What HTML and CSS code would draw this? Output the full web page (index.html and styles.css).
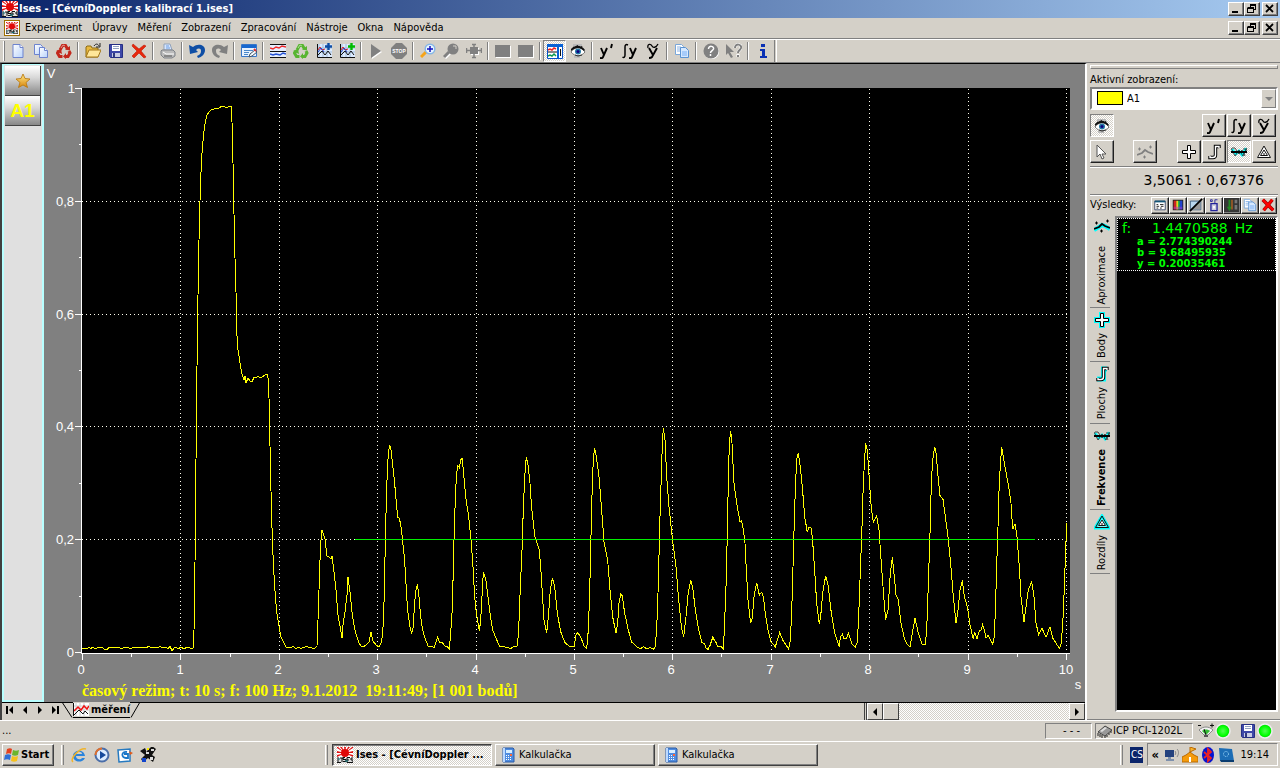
FILE: index.html
```html
<!DOCTYPE html>
<html lang="cs">
<head>
<meta charset="utf-8">
<title>Ises - [CévníDoppler s kalibrací 1.ises]</title>
<link rel="stylesheet" href="styles.css">
</head>
<body>
<svg class="defs" aria-hidden="true">
  <defs>
    <linearGradient id="gold" x2="0" y2="1"><stop stop-color="#ffe98a"/><stop offset="1" stop-color="#d8860b"/></linearGradient>
    <linearGradient id="sheet" x2="1" y2="1"><stop stop-color="#fff"/><stop offset="1" stop-color="#b9d3fb"/></linearGradient>
    <radialGradient id="led"><stop stop-color="#5f5"/><stop offset=".7" stop-color="#0f0"/><stop offset="1" stop-color="#0c0"/></radialGradient>
    <symbol id="ises" viewBox="0 0 16 16"><rect width="16" height="16" fill="#fff"/><path d="M8 6L0 1V0h1zM8 6L3 0h2zM8 6L7 0h2zM8 6l3-6h2zM8 6l7-6h1v1zM8 6l8-2v2zM8 6L0 4v2zM8 6L0 8v2zM8 6l8 2v2z" fill="#e01010"/><circle cx="8" cy="6" r="4" fill="#e00808"/><path d="M0 11h16v5H0z" fill="#ddd"/><path d="M1 10v5M0 15.500h4M3 11h4M5 11v4M8 10.500H6v2h3v2H6M13 10.500h-3v5h3M10 13h2M16 11h-2v2h2v2.500h-3" stroke="#111" fill="none"/><path d="M1 12h2M8 14h3" stroke="#0a7c80"/></symbol>
    <symbol id="page" viewBox="0 0 16 16"><path d="M3 1.500h7l3 3v10H3z" fill="url(#sheet)" stroke="#6d83cf"/><path d="M10 1.500v3h3" fill="#fff" stroke="#6d83cf"/></symbol>
    <symbol id="pages" viewBox="0 0 16 16"><path d="M1.500 1.500h6l2 2v8h-8z" fill="url(#sheet)" stroke="#6d83cf"/><path d="M6.500 4.500h5l3 3v7h-8z" fill="url(#sheet)" stroke="#6d83cf"/><path d="M11.500 4.500v3h3" fill="#fff" stroke="#6d83cf"/></symbol>
    <symbol id="copy" viewBox="0 0 16 16"><path d="M1.500 1.500h6l2 2v8h-8z" fill="#fff" stroke="#7aa7d9"/><path d="M3 4h4M3 6h5M3 8h3" stroke="#8ab4e8"/><path d="M6.500 4.500h5l3 3v7h-8z" fill="#d5e8ff" stroke="#5b93d2"/><path d="M8 8h5v5H8z" fill="#a6cbfa"/></symbol>
    <symbol id="recycle" viewBox="0 0 16 16"><path d="M4 7l2.500-4.500h3L11.500 6M13 8l1 2-2 3.500H9M6.500 13.500h-3L1.500 10 3 8" fill="none" stroke="currentColor" stroke-width="3"/><path d="M9 6.500l5 1V3zM10 10v6l-3-2.500zM0 8l5-2 1 5z" fill="currentColor"/><path d="M5 5l2-3 2 1" stroke="#fff" stroke-opacity=".5" fill="none"/></symbol>
    <symbol id="open" viewBox="0 0 16 16"><path d="M1 14V4l1-1h4l1 2h6v9z" fill="#e9b93e" stroke="#8c6a12"/><path d="M1 14l3-7h12l-3 7z" fill="#ffe79a" stroke="#a5781a"/><path d="M9 3c2-3 4-2 5 0M15 0v4h-4" fill="none" stroke="#222"/></symbol>
    <symbol id="floppy" viewBox="0 0 16 16"><path d="M1.500 1.500h13v13h-12l-1-1z" fill="#3e48a8" stroke="#262f84"/><path d="M4 2h8v6H4z" fill="#fff"/><path d="M5 3.500h6M5 5.500h6" stroke="#90a0c0"/><path d="M4 10h8v4H4z" fill="#c8cce4"/><path d="M5 10h2v4H5z" fill="#30397e"/></symbol>
    <symbol id="cross" viewBox="0 0 16 16"><path d="M2 1l6 5 5-4 2 1-5 5 5 6-2 1-5-5-5 5-2-2 5-5-5-5z" fill="#e8270c" stroke="#bd1a05" stroke-width=".6"/></symbol>
    <symbol id="printer" viewBox="0 0 16 16"><path d="M4 7V1h6l2 6z" fill="#d6e6ff" stroke="#91a3bb"/><path d="M6 3h3M6 5h4" stroke="#6c9de0"/><path d="M2 7h11l2 2v4l-3 2H4l-3-3V8z" fill="#bbb" stroke="#7e8288"/><path d="M3 9l3 2h8" stroke="#fff" fill="none"/><path d="M4 13h8" stroke="#555"/></symbol>
    <symbol id="undo" viewBox="0 0 16 16"><path d="M0 2l4 2c5-4 12-2 12 3 0 4-3 7-7 8l-1-2c3-1 4-3 4-5 0-3-3-3-5-1l2 2-8 2z" fill="currentColor"/></symbol>
    <symbol id="note" viewBox="0 0 16 16"><path d="M.5 1.500h15v12H.5z" fill="#e8f2ff" stroke="#3876c8"/><path d="M1 2h14v3H1z" fill="#1767cf"/><path d="M3 7.500h9M3 9.500h5M3 11.500h4" stroke="#4b88c9"/><path d="M8 14l1-3 5-4 2 2-5 4z" fill="#f6fbff" stroke="#456"/><path d="M13 6l2 2" stroke="#d33" stroke-width="2"/></symbol>
    <symbol id="chart" viewBox="0 0 16 16"><path d="M0 1h16v14H0z" fill="#e5efff"/><path d="M0 1.500h16M0 14.500h16M0 8.500h16" stroke="#111"/><path d="M0 5l3 1 3-2 3 1 3-2 4 1" stroke="#f12b2b" fill="none" stroke-width="1.500"/><path d="M0 11l3 1 3-1 4 1 3-2 3 1" stroke="#2350d4" fill="none" stroke-width="1.500"/></symbol>
    <symbol id="addchart" viewBox="0 0 16 16"><path d="M1 1h15v13H1z" fill="#dcebff"/><path d="M3 1v13M7 1v13M11 1v13M1 5h15M1 9h15" stroke="#a3bdd9"/><path d="M1.500 1v13.500H16" stroke="#111" fill="none"/><path d="M2 7l2-3 2 3 3-1" stroke="#e12020" fill="none"/><path d="M2 9l3-4 3 4" stroke="#2545d0" fill="none"/><path d="M2 12l4-4 3 4 3-4 3 4" stroke="#111" fill="none"/><path d="M12.500 0v7M9 3.500h7" stroke="currentColor" stroke-width="2.400"/></symbol>
    <symbol id="play" viewBox="0 0 16 16"><path d="M4 2l10 7-10 7z" fill="#fff"/><path d="M3 1l10 7-10 7z" fill="#808080"/></symbol>
    <symbol id="stop" viewBox="0 0 16 16"><path d="M5 0h6l5 5v6l-5 5H5l-5-5V5z" fill="#808080"/><text x="8" y="10" class="tiny" text-anchor="middle" fill="#fff">STOP</text></symbol>
    <symbol id="zoomin" viewBox="0 0 16 16"><path d="M6 9l-5 5" stroke="#f5a418" stroke-width="3"/><circle cx="10" cy="6" r="4.800" fill="#e9f6ff" stroke="#86b7e6" stroke-width="1.500"/><path d="M10 3v6M7 6h6" stroke="#1010c0" stroke-width="1.500"/></symbol>
    <symbol id="zoomout" viewBox="0 0 16 16"><path d="M7 10l-5 5" stroke="#fff" stroke-width="3"/><path d="M6 9l-5 5" stroke="#808080" stroke-width="3"/><circle cx="10" cy="6" r="5.500" fill="#808080"/><path d="M10 3h3v3" stroke="#d4d0c8" fill="none"/></symbol>
    <symbol id="fit" viewBox="0 0 16 16"><path d="M5 5h8v7H5z" fill="#fff"/><path d="M4 4h8v7H4z" fill="#808080"/><path d="M8 1v14M0 7.500h16M6 1.500h4M6 14.500h4M.5 5v5M15.500 5v5" fill="none" stroke="#808080" stroke-width="1.500"/></symbol>
    <symbol id="block" viewBox="0 0 16 16"><path d="M1 3h15v12H1z" fill="#fff"/><path d="M0 2h15v12H0z" fill="#808080"/></symbol>
    <symbol id="panel" viewBox="0 0 16 16"><path d="M.5 1.500h15v14H.5z" fill="#fff" stroke="#0752c8"/><path d="M0 1h16v3H0zM10 3h2v12h-2z" fill="#0862d6"/><path d="M1 7l2-1 2 1 2-2 2 1" stroke="#e22" fill="none" stroke-width="1.500"/><path d="M1 9h9" stroke="#111"/><path d="M1 13l2-1 2 1 2-2 2 2" stroke="#0a9a50" fill="none" stroke-width="1.500"/><path d="M13 6h1v7h-1z" fill="#111"/></symbol>
    <symbol id="eye" viewBox="0 0 16 16"><path d="M3 1h9v2H3zM4 13h6v2H4z" fill="#bbb"/><path d="M1 9c3-5 10-6 14 0-4 5-10 5-14 0z" fill="#fff" stroke="#777"/><path d="M1 6c3-4 10-5 14 1l-1 1C10 4 6 4 1 8z" fill="#111"/><path d="M3 4l2 1M7 2l1 2M12 3l-1 2" stroke="#111"/><circle cx="8" cy="8.500" r="3" fill="#2378a5"/><circle cx="8" cy="8.500" r="1.500" fill="#100080"/><path d="M5 12l3 1 4-1" stroke="#333" fill="none"/></symbol>
    <symbol id="deriv" viewBox="0 0 16 16"><path d="M2 5l3 7M8 5l-4 9c-1 2-2 1-3 1M13 1l-1 4" fill="none" stroke="#000" stroke-width="1.900"/></symbol>
    <symbol id="integ" viewBox="0 0 16 16"><path d="M6 2c-2-1-3 0-3 2v8c0 2-1 3-2.500 2" fill="none" stroke="#000" stroke-width="1.500"/><path d="M8 5l3 7M14 5l-4 9c-1 2-2 1-3 1" fill="none" stroke="#000" stroke-width="1.900"/></symbol>
    <symbol id="filter" viewBox="0 0 16 16"><path d="M4 5l4 7M12 5l-5 9c-1 1-2 1-3 1" fill="none" stroke="#000" stroke-width="1.900"/><path d="M3 5c-1-5 3-4 4-2s4 2 6-2" fill="none" stroke="#000" stroke-width="1.300"/></symbol>
    <symbol id="help" viewBox="0 0 16 16"><circle cx="9" cy="9" r="7" fill="#fff"/><circle cx="8" cy="8" r="7.500" fill="#808080"/><path d="M5.500 6c0-4 6-3 5 0-1 2-3 2-3 4M7.500 11v2" fill="none" stroke="#fff" stroke-width="1.500"/></symbol>
    <symbol id="whatis" viewBox="0 0 16 16"><path d="M0 1v11l2-2 3 5 2-1-3-5h4z" fill="#808080"/><path d="M9 5c0-5 7-4 6 0-1 3-3 2-3 5M12 11v3" fill="none" stroke="#fff" stroke-width="3"/><path d="M9 5c0-5 7-4 6 0-1 3-3 2-3 5M12 12v2" fill="none" stroke="#808080" stroke-width="2"/></symbol>
    <symbol id="info" viewBox="0 0 16 16"><path d="M6 1h4v3H6zM5 6h5v7h2v2H5v-2h2V8H5z" fill="#0a30b4"/></symbol>
    <symbol id="pointer" viewBox="0 0 16 16"><path d="M3 1v12l3-3 2 5 2-1-2-4h4z" fill="#fff" stroke="#555"/></symbol>
    <symbol id="approx" viewBox="0 0 16 16"><path d="M0 12l5-3 3-2 3 1 5 3" fill="none" stroke="var(--glow,transparent)" stroke-width="4"/><path d="M0 11l5-2 3-3 3 2 5 2" fill="none" stroke="currentColor" stroke-width="1.800"/><path d="M1 5h3M2.500 3.500v3M12 3h3M13.500 1.500v3M6 13h3M7.500 11.500v3" stroke="currentColor"/></symbol>
    <symbol id="plus" viewBox="0 0 16 16"><path d="M6.500 1.500h3v5h5v3h-5v5h-3v-5h-5v-3h5z" fill="none" stroke="var(--glow,transparent)" stroke-width="3"/><path d="M6.500 1.500h3v5h5v3h-5v5h-3v-5h-5v-3h5z" fill="#fff" stroke="#000"/></symbol>
    <symbol id="area" viewBox="0 0 16 16"><path d="M13 3H9.500v10H3" fill="none" stroke="var(--glow,transparent)" stroke-width="5"/><path d="M13 4V2.500H9.500V11c0 2-1 2.500-2.500 2.500H4V12" fill="none" stroke="#000" stroke-width="3.400"/><path d="M13 4V2.500H9.500V11c0 2-1 2.500-2.500 2.500H4V12" fill="none" stroke="#fff" stroke-width="1.400"/></symbol>
    <symbol id="freq" viewBox="0 0 16 16"><path d="M1 5l4 5 3-3 3 4 4-7" stroke="#0ff" stroke-width="2.500" fill="none"/><path d="M0 4l4 8 4-6 4 6 4-8M1 4h3l4 6 3-4 3 6M12 5h3v4" fill="none" stroke="#222" stroke-width=".8"/><path d="M0 8h16" stroke="#000" stroke-width="2"/></symbol>
    <symbol id="delta" viewBox="0 0 16 16"><path d="M8 2L1 14h14z" fill="#fff" stroke="var(--glow,transparent)" stroke-width="3"/><path d="M8 2L1.500 13.500h13zM8 6l-3.500 5.500h7zM8 9v2" fill="none" stroke="#111"/></symbol>
    <symbol id="chip" viewBox="0 0 16 16"><path d="M1 9l7-6 7 4-7 6z" fill="#999" stroke="#444"/><path d="M3 8l5-4 2 1-5 4z" fill="#ddd"/><path d="M1 10v3M3 11v3M5 12v3M8 13v2M10 12v2M12 10v2M14 8v2" stroke="#222"/></symbol>
    <symbol id="calc" viewBox="0 0 16 16"><path d="M3 1h10l1 1v13H3z" fill="#4f8ce0" stroke="#2c5ca6"/><path d="M3 1h2v14H3z" fill="#bcd9ff"/><path d="M6 3h6v3H6z" fill="#d9efff"/><path d="M6 8h1v1H6zM8 8h1v1H8zM6 10h1v1H6zM8 10h1v1H8zM6 12h1v1H6zM8 12h1v1H8zM10 10h1v1h-1zM10 12h1v1h-1z" fill="#fff"/><path d="M10 7h2v2h-2z" fill="#f63"/></symbol>
    <symbol id="wmin" viewBox="0 0 12 10"><path d="M2 7h6v2H2z"/></symbol>
    <symbol id="wrest" viewBox="0 0 12 10"><path d="M4.500 1v2M4 1h6M9.500 1v5M10 5.500H8M1.500 4v5M1 4h6M7.500 4v5M1 8.500h7" fill="none" stroke="#000"/><path d="M4 0h6v2H4zM2 3h6v2H2z"/></symbol>
    <symbol id="wclose" viewBox="0 0 12 10"><path d="M2 1l7 7M9 1L2 8" stroke="#000" stroke-width="1.800"/></symbol>
  </defs>
</svg>

<header class="titlebar">
  <svg class="ic"><use href="#ises"/></svg>
  <h1>Ises - [CévníDoppler s kalibrací 1.ises]</h1>
  <div class="winbtns">
    <button aria-label="Minimalizovat"><svg><use href="#wmin"/></svg></button><button aria-label="Obnovit"><svg><use href="#wrest"/></svg></button><button class="close" aria-label="Zavřít"><svg><use href="#wclose"/></svg></button>
  </div>
</header>

<nav class="menubar">
  <svg class="ic doc"><use href="#ises"/></svg>
  <button>Experiment</button><button>Úpravy</button><button>Měření</button><button>Zobrazení</button><button>Zpracování</button><button>Nástroje</button><button>Okna</button><button>Nápověda</button>
  <div class="winbtns">
    <button aria-label="Minimalizovat dokument"><svg><use href="#wmin"/></svg></button><button aria-label="Obnovit dokument"><svg><use href="#wrest"/></svg></button><button class="close" aria-label="Zavřít dokument"><svg><use href="#wclose"/></svg></button>
  </div>
</nav>

<div class="toolbar" role="toolbar" aria-label="Nástroje">
  <i class="grip"></i>
  <button aria-label="Nový"><svg class="ic"><use href="#page"/></svg></button>
  <button aria-label="Nový podle"><svg class="ic"><use href="#pages"/></svg></button>
  <button aria-label="Vymazat" class="red"><svg class="ic"><use href="#recycle"/></svg></button>
  <i class="sep"></i>
  <button aria-label="Otevřít"><svg class="ic"><use href="#open"/></svg></button>
  <button aria-label="Uložit"><svg class="ic"><use href="#floppy"/></svg></button>
  <button aria-label="Smazat"><svg class="ic"><use href="#cross"/></svg></button>
  <i class="sep"></i>
  <button aria-label="Tisk"><svg class="ic"><use href="#printer"/></svg></button>
  <i class="sep"></i>
  <button aria-label="Zpět" class="blue"><svg class="ic"><use href="#undo"/></svg></button>
  <button aria-label="Znovu" class="gray"><svg class="ic flip"><use href="#undo"/></svg></button>
  <i class="sep"></i>
  <button aria-label="Poznámka"><svg class="ic"><use href="#note"/></svg></button>
  <i class="sep"></i>
  <button aria-label="Graf"><svg class="ic"><use href="#chart"/></svg></button>
  <button aria-label="Obnovit graf" class="green"><svg class="ic"><use href="#recycle"/></svg></button>
  <button aria-label="Přidat graf" class="blue"><svg class="ic"><use href="#addchart"/></svg></button>
  <button aria-label="Přidat měření" class="lime"><svg class="ic"><use href="#addchart"/></svg></button>
  <i class="sep"></i>
  <button aria-label="Start měření"><svg class="ic"><use href="#play"/></svg></button>
  <button aria-label="Stop měření"><svg class="ic"><use href="#stop"/></svg></button>
  <i class="sep"></i>
  <button aria-label="Zvětšit"><svg class="ic"><use href="#zoomin"/></svg></button>
  <button aria-label="Zmenšit"><svg class="ic"><use href="#zoomout"/></svg></button>
  <button aria-label="Přizpůsobit"><svg class="ic"><use href="#fit"/></svg></button>
  <i class="sep"></i>
  <button aria-label="Okno 1"><svg class="ic"><use href="#block"/></svg></button>
  <button aria-label="Okno 2"><svg class="ic"><use href="#block"/></svg></button>
  <i class="sep"></i>
  <button aria-label="Panel" class="on"><svg class="ic"><use href="#panel"/></svg></button>
  <button aria-label="Zobrazit"><svg class="ic"><use href="#eye"/></svg></button>
  <i class="sep"></i>
  <button aria-label="Derivace"><svg class="ic"><use href="#deriv"/></svg></button>
  <button aria-label="Integrál"><svg class="ic"><use href="#integ"/></svg></button>
  <button aria-label="Vyhlazení"><svg class="ic"><use href="#filter"/></svg></button>
  <i class="sep"></i>
  <button aria-label="Kopírovat"><svg class="ic"><use href="#copy"/></svg></button>
  <i class="sep"></i>
  <button aria-label="Nápověda"><svg class="ic"><use href="#help"/></svg></button>
  <button aria-label="Co je to"><svg class="ic"><use href="#whatis"/></svg></button>
  <i class="sep"></i>
  <button aria-label="Informace"><svg class="ic"><use href="#info"/></svg></button>
  <i class="toolend"></i>
</div>

<main class="work">
  <section class="doc-area">
    <div class="canvas">
      <div class="channels">
        <button aria-label="Oblíbené"><svg class="ic" viewBox="0 0 16 16"><path d="M8 1l2 4.500 5 .5-4 3.500 1.500 5L8 12l-4.500 2.500 1.500-5L1 6l5-.5z" fill="url(#gold)" stroke="#b87406" stroke-width=".8"/></svg></button>
        <button class="ch">A1</button>
      </div>
      <svg class="plot" viewBox="44 64 1041 638" preserveAspectRatio="none" role="img" aria-label="Průběh signálu A1">
        <rect x="82" y="88" width="988" height="565" fill="#000"/>
        <g class="grid">
          <path d="M82 201.500H1067M82 314.500H1067M82 426.500H1067M82 539.500H1067"/>
          <path d="M180.500 89V652M279.500 89V652M377.500 89V652M476.500 89V652M574.500 89V652M672.500 89V652M771.500 89V652M869.500 89V652M968.500 89V652M1066.500 89V652"/>
        </g>
        <path class="axis" d="M81.500 88V653.500H1070M75 88.500h6M75 201.500h6M75 314.500h6M75 426.500h6M75 539.500h6M75 652.500h6M79 144.500h3M79 257.500h3M79 370.500h3M79 483.500h3M79 596.500h3M82.500 653v7M180.500 653v7M279.500 653v7M377.500 653v7M476.500 653v7M574.500 653v7M672.500 653v7M771.500 653v7M869.500 653v7M968.500 653v7M1066.500 653v7M131.500 653v4M230.500 653v4M328.500 653v4M426.500 653v4M525.500 653v4M623.500 653v4M721.500 653v4M820.500 653v4M918.500 653v4M1017.500 653v4"/>
        <g class="trace">
          <polyline points="82,648 86,648 87,649 89,647 91,649 92,647 94,648 97,648 99,647 101,648 102,647 104,649 107,650 109,647 112,648 115,647 117,648 119,647 121,649 125,647 129,648 132,648 134,647 138,648 142,647 146,648 149,646 151,648 154,647 158,648 160,646 162,648 166,647 168,649 170,646 172,651 174,648 176,647 178,649 181,647 184,649 187,647 190,648 193,648 194,631 195,563 196,460 197,367 198,295 199,240 200,201 201,172 202,153 203,141 204,131 205,124 206,119 207,115 209,112 211,110 214,109 217,108 219,108 222,106 225,107 228,107 231,106 232,122 233,163 234,214 235,258 236,292 237,336 238,350 239,356 240,363 242,374 244,380 245,376 246,383 248,378 250,381 252,382 254,377 256,378 258,376 260,378 262,377 265,375 267,374 268,378 269,398 270,446 271,491 272,528 273,555 274,575 275,591 276,604 277,614 279,626 281,637 283,641 286,647 289,647 291,648 293,646 295,648 297,648 299,647 301,649 303,647 305,647 307,646 309,648 311,647 313,649 315,648 317,646 318,620 319,590 320,560 321,540 322,530 325,539 327,556 329,557 331,559 332,556 334,572 336,590 338,615 340,626 342,638 343,625 345,612 347,595 348,577 350,592 352,612 354,625 356,634 359,643 361,646 363,647 366,645 369,642 371,632 373,641 376,645 379,647 381,643"/>
          <polyline transform="translate(370 400) scale(.333333)" points="34,728 37,706 40,668 43,575 46,420 49,300 52,212 55,160 59,135 63,150 68,195 74,250 80,320 84,352 88,354 94,385 98,425 103,470 107,530 110,590 114,640 120,680 125,702 130,680 133,620 137,575 142,553 147,590 152,650 158,690 165,715 175,740 184,738 192,743 203,710 208,726 217,728 225,738 232,740 238,746 242,700 246,640 250,510 253,380 256,300 259,230 263,197 268,203 272,180 276,174 280,210 287,290 296,350 303,418 309,500 314,590 319,640 328,694 332,660 336,590 338,540 341,520 347,535 352,575 360,640 368,690 378,714 388,738 400,740 410,742 422,746 430,740 442,738 446,690 451,560 457,430 460,320 463,260 466,200 469,172 474,195 480,250 485,325 495,412 508,450 514,530 522,660 530,699 536,640 541,570 547,534 554,560 562,640 572,695 585,728 600,740 612,740 618,705 622,698 632,710 642,738 650,746 655,690 659,580 662,450 665,320 668,220 671,165 674,145 679,170 687,230 695,330 702,425 713,480 720,570 728,650 738,700 743,670 747,610 752,583 757,588 764,640 775,690 785,726 800,740 812,746 820,740 830,746 842,743 850,747 855,742 860,690 864,580 868,430 871,310 874,230 877,130 880,83 885,120 890,230 897,320 907,415 918,500 926,600 934,680 941,711 948,650 954,585 962,541 968,560 976,630 986,690 996,728 1003,730 1008,745 1015,748 1028,712 1040,730"/>
          <polyline transform="translate(710 400) scale(.333333)" points="0,738 9,712 22,738 34,740 40,748 43,690 48,560 52,400 55,240 58,130 62,92 66,130 72,250 80,310 90,365 95,362 100,390 105,430 109,510 114,600 122,670 127,655 132,590 140,548 148,585 155,577 160,590 166,640 174,690 183,726 196,740 209,698 218,720 236,747 241,720 245,640 249,500 253,360 257,240 261,175 265,158 270,195 277,260 284,350 292,397 297,382 304,384 308,425 314,510 320,610 328,672 332,650 338,580 347,527 355,560 364,640 374,700 388,740 391,710 397,703 402,716 410,716 415,698 426,732 436,742 442,725 446,650 450,540 455,410 459,280 463,190 467,130 472,150 478,240 484,325 490,367 500,347 507,390 514,490 522,600 527,659 534,630 541,520 547,472 553,530 558,585 565,600 573,670 583,715 592,734 600,740 607,700 615,655 624,695 636,733 645,735 650,695 655,550 660,400 664,250 668,180 674,140 679,165 685,240 690,287 699,298 706,350 714,410 722,490 730,590 738,670 743,640 750,570 757,541 763,590 772,620 780,675 790,718 794,695 801,716 808,693 813,690 818,674 823,690 828,715 834,706 848,732 852,715 856,640 860,500 864,380 868,240 875,142 884,195 896,260 903,310 908,388 915,372 921,410 928,500 933,590 942,667 948,620 955,570 965,545 972,590 978,670 986,703 996,685 1008,712 1020,680 1028,714 1048,745 1054,730 1060,640 1066,480 1070,370"/>
        </g>
        <path class="cursor" d="M355 539.500H1035"/>
        <g class="ylab"><text x="75" y="93">1</text><text x="74" y="206">0,8</text><text x="74" y="319">0,6</text><text x="74" y="431">0,4</text><text x="74" y="544">0,2</text><text x="74" y="657">0</text></g>
        <g class="xlab"><text x="81" y="674">0</text><text x="180" y="674">1</text><text x="278" y="674">2</text><text x="376" y="674">3</text><text x="475" y="674">4</text><text x="573" y="674">5</text><text x="671" y="674">6</text><text x="770" y="674">7</text><text x="868" y="674">8</text><text x="967" y="674">9</text><text x="1066" y="674">10</text><text x="1078" y="689">s</text><text x="51" y="78">V</text></g>
        <text class="caption" x="82" y="696" xml:space="preserve">časový režim; t: 10 s; f: 100 Hz; 9.1.2012  19:11:49; [1 001 bodů]</text>
      </svg>
    </div>
    <div class="sheetbar">
      <div class="sheetnav">
        <button aria-label="První"><svg viewBox="0 0 8 8"><path d="M0 0h2v8H0zM7 0v8L3 4z"/></svg></button>
        <button aria-label="Předchozí"><svg viewBox="0 0 8 8"><path d="M6 0v8L2 4z"/></svg></button>
        <button aria-label="Další"><svg viewBox="0 0 8 8"><path d="M2 0v8l4-4z"/></svg></button>
        <button aria-label="Poslední"><svg viewBox="0 0 8 8"><path d="M6 0h2v8H6zM1 0v8l4-4z"/></svg></button>
      </div>
      <button class="sheet">
        <svg class="slant" viewBox="0 0 11 16"><path d="M0 0l10 15.500" stroke="#000" fill="none"/></svg>
        <span><svg class="ic" viewBox="0 0 16 16"><path d="M0 1h16v13H0z" fill="#fff"/><path d="M3 1v13M7 1v13M11 1v13M0 4h16M0 8h16" stroke="#ccc"/><path d="M1 9l4-4 3 3 3-4 3 3 2-3" stroke="#e11" fill="none" stroke-width="1.500"/><path d="M1 13l5-5 4 4 2-3 3 3M.500 1v13" stroke="#111" fill="none"/></svg>měření</span>
        <svg class="slant" viewBox="0 0 11 16"><path d="M10 0L1 15.500" stroke="#000" fill="none"/></svg>
      </button>
      <i class="fill"></i>
      <div class="hscroll">
        <button aria-label="Posun vlevo"><svg viewBox="0 0 8 8"><path d="M6 0v8L2 4z"/></svg></button>
        <i class="thumb"></i><i class="track"></i>
        <button aria-label="Posun vpravo"><svg viewBox="0 0 8 8"><path d="M2 0v8l4-4z"/></svg></button>
      </div>
    </div>
  </section>

  <aside class="side">
    <i class="hgrip"></i>
    <label for="view">Aktivní zobrazení:</label>
    <div class="combo">
      <select id="view"><option>A1</option></select>
      <i class="swatch"></i>
      <i class="drop"><svg viewBox="0 0 8 8"><path d="M0 2h8L4 6z" fill="#808080"/></svg></i>
    </div>
    <div class="btnrow">
      <button class="on" aria-label="Zobrazit křivku"><svg class="ic"><use href="#eye"/></svg></button>
      <i class="fill"></i>
      <button aria-label="Derivace křivky"><svg class="ic"><use href="#deriv"/></svg></button>
      <button aria-label="Integrál křivky"><svg class="ic"><use href="#integ"/></svg></button>
      <button aria-label="Vyhlazení křivky"><svg class="ic"><use href="#filter"/></svg></button>
    </div>
    <div class="btnrow">
      <button aria-label="Ukazatel"><svg class="ic"><use href="#pointer"/></svg></button>
      <button class="gray spaced" aria-label="Aproximovat"><svg class="ic"><use href="#approx"/></svg></button>
      <i class="fill"></i>
      <button aria-label="Bod"><svg class="ic"><use href="#plus"/></svg></button>
      <button aria-label="Plocha"><svg class="ic"><use href="#area"/></svg></button>
      <button class="on" aria-label="Frekvence křivky"><svg class="ic"><use href="#freq"/></svg></button>
      <button aria-label="Rozdíl"><svg class="ic"><use href="#delta"/></svg></button>
    </div>
    <output class="coords">3,5061 : 0,67376</output>
    <div class="reshead">
      <span>Výsledky:</span>
      <i class="fill"></i>
      <button aria-label="Nastavení"><svg viewBox="0 0 16 16"><path d="M2 3.500h12v10H2z" fill="#fff" stroke="#346"/><path d="M2 3h12v2H2z" fill="#157"/><path d="M4 7.500h2M8 7.500h4M4 9.500h3M9 9.500h3M4 11.500h2M8 11.500h2" stroke="#111"/></svg></button>
      <button aria-label="Barvy"><svg viewBox="0 0 16 16"><path d="M2 2h12v12H2z" fill="#222"/><path d="M3 3h3v10H3z" fill="#c22"/><path d="M6 3h2v10H6z" fill="#ec2"/><path d="M8 3h2v10H8z" fill="#2b4"/><path d="M10 3h3v10h-3z" fill="#24c"/><path d="M3 10h10v3H3z" fill="#a3c" fill-opacity=".5"/></svg></button>
      <button aria-label="Kontrast"><svg viewBox="0 0 16 16"><path d="M1.500 3.500h12v10h-12z" fill="#b9d7ee" stroke="#357"/><path d="M13 4v9H3z" fill="#999"/><path d="M1 15L15 1" stroke="#000" stroke-width="2"/></svg></button>
      <button aria-label="Export"><svg viewBox="0 0 16 16"><path d="M4.500 6.500h7v8h-7z" fill="#ccd" stroke="#229" stroke-width="1.500"/><path d="M7 9h2v3H7z" fill="#fff"/><path d="M9 6V2h3M4 2h2v2H4z" fill="none" stroke="#229"/></svg></button>
      <button class="dark" aria-label="Záznam"><svg viewBox="0 0 16 16"><path d="M1 1h14v14H1z" fill="#363636"/><path d="M4 2h2v8h2l-3 5-3-5h2z" fill="#282"/><path d="M8 2v11" stroke="#b62" stroke-width="1.500"/><path d="M11 2h3v4h-3zM11 8h3v5h-3z" fill="#777"/></svg></button>
      <button aria-label="Kopírovat výsledky"><svg><use href="#copy"/></svg></button>
      <button aria-label="Smazat výsledky"><svg viewBox="0 0 16 16"><path d="M2 2l12 12M13 2L3 14" stroke="#900" stroke-width="4"/><path d="M2 2l12 12M13 2L3 14" stroke="#f00" stroke-width="2.500"/></svg></button>
    </div>
    <div class="results">
      <div class="vtabs" role="tablist">
        <button role="tab"><svg class="ic"><use href="#approx"/></svg><span>Aproximace</span></button>
        <button role="tab"><svg class="ic"><use href="#plus"/></svg><span>Body</span></button>
        <button role="tab"><svg class="ic"><use href="#area"/></svg><span>Plochy</span></button>
        <button role="tab" class="cur" aria-selected="true"><svg class="ic"><use href="#freq"/></svg><span>Frekvence</span></button>
        <button role="tab"><svg class="ic"><use href="#delta"/></svg><span>Rozdíly</span></button>
      </div>
      <div class="list">
        <div class="item">
          <p class="f"><span>f:</span><span>1.4470588</span><span>Hz</span></p>
          <p>a = 2.774390244</p><p>b = 9.68495935</p><p>y = 0.20035461</p>
        </div>
      </div>
    </div>
  </aside>
</main>

<div class="status">
  <span>...</span>
  <i class="fill"></i>
  <span class="cell dash">- - -</span>
  <span class="cell"><svg class="ic"><use href="#chip"/></svg>ICP PCI-1202L</span>
  <svg class="ic gauge" viewBox="0 0 16 16"><path d="M1 7c4-4 10-4 14 0l-5 5H6z" fill="#f4f4f4" stroke="#888"/><path d="M4 8c2-2 6-2 8 0l-3 3H7z" fill="#3b3"/><path d="M8 12L6 6" stroke="#111"/><path d="M6 12h4v2H6z" fill="#555"/><path d="M0 2.500h3M12 2.500h4M14 .500v4" stroke="#111"/></svg>
  <svg class="ic led" viewBox="0 0 16 16"><circle cx="8" cy="8" r="7" fill="url(#led)" stroke="#eee" stroke-width="1.500"/></svg>
  <svg class="ic"><use href="#floppy"/></svg>
  <svg class="ic led2" viewBox="0 0 16 16"><circle cx="8" cy="8" r="7" fill="url(#led)" stroke="#eee" stroke-width="1.500"/></svg>
</div>

<footer class="taskbar">
  <button class="start"><svg class="ic" viewBox="0 0 16 16"><path d="M3 2c2-1 4-1 5 0L7 7C6 6 4 6 2 7z" fill="#e5411e"/><path d="M9 3c2 1 4 1 6 0l-1 5c-2 1-4 1-6 0z" fill="#6cb52d"/><path d="M1 8c2-1 4-1 6 0l-1 5c-2-1-4-1-6 0z" fill="#2f6fd6"/><path d="M8 9c2 1 4 1 6 0l-1 5c-2 1-4 1-6 0z" fill="#f7c11b"/></svg>Start</button>
  <i class="tgrip"></i>
  <div class="quick">
    <button aria-label="Internet Explorer"><svg class="ic" viewBox="0 0 16 16"><path d="M14 9H5c0 4 5 4 6 2h3c-3 6-12 4-12-2s11-8 12 0zM5 7h6c0-3-6-3-6 0z" fill="#2b84dc"/><path d="M2 15C-2 12 9 0 15 2" fill="none" stroke="#f0b42a" stroke-width="1.500"/></svg></button>
    <button aria-label="Media Player"><svg class="ic" viewBox="0 0 16 16"><circle cx="8" cy="8" r="6.500" fill="#dcecff" stroke="#4b6ea8" stroke-width="2"/><path d="M8 1.500A6.500 6.500 0 001.500 8" stroke="#e0702d" stroke-width="2" fill="none"/><path d="M6 4l6 4-6 4z" fill="#174a9c"/></svg></button>
    <button aria-label="Outlook"><svg class="ic" viewBox="0 0 16 16"><path d="M1 3l12-1v12l-11 1z" fill="#fff" stroke="#277ac0" stroke-width="1.500"/><path d="M10 5c-6-1-6 6-1 6h2V7H7" fill="none" stroke="#1977c9" stroke-width="1.800"/><path d="M12 4l4 2-3 2z" fill="#dd5a1c"/></svg></button>
    <button aria-label="Motýl"><svg class="ic" viewBox="0 0 16 16"><path d="M7 6L5 1 0 4l5 4-4 4 2 3 5-4 5 4 2-5-3-2 4-6-4-3-5 5z" fill="#111"/><path d="M2 11h4v4H2z" fill="#14c"/><path d="M11 2h3v2h-3zM10 10h3v3h-3zM6 5h3v2H6z" fill="#ddd"/><path d="M7 1h2v2H7z" fill="#fe0"/></svg></button>
  </div>
  <i class="tgrip far"></i>
  <div class="tasks">
    <button class="active"><svg class="ic"><use href="#ises"/></svg>Ises - [CévníDoppler ...</button>
    <button><svg class="ic"><use href="#calc"/></svg>Kalkulačka</button>
    <button><svg class="ic"><use href="#calc"/></svg>Kalkulačka</button>
  </div>
  <i class="tgrip"></i>
  <button class="lang">CS</button>
  <div class="tray">
    <b>«</b>
    <svg class="ic" viewBox="0 0 16 16"><path d="M1 3h9v7H1z" fill="#24427e"/><path d="M4 10h3v2H4zM2 12h8v2H2z" fill="#7e91ad"/><path d="M11 4c1 1 1 3 0 4M13 2c2 2 2 5 0 8" fill="none" stroke="#888"/></svg>
    <svg class="ic" viewBox="0 0 16 16"><path d="M0 15V10l4-2 4-3 4 3 4 2v5z" fill="#f59b0b" stroke="#b96a05"/><path d="M8 6V0l6 2-6 3" fill="#fbb62e" stroke="#b96a05"/><path d="M7 10h2v5H7z" fill="#fff"/></svg>
    <svg class="ic" viewBox="0 0 16 16"><ellipse cx="8" cy="8" rx="6" ry="8" fill="#0714cf"/><path d="M4 5l7 6-3 3V2l3 3-7 6" stroke="#e22" fill="none" stroke-width="1.800"/></svg>
    <svg class="ic" viewBox="0 0 16 16"><path d="M1 1l13 1 2 12H2z" fill="#1c6db5"/><path d="M2 13h14v2H3z" fill="#0b3d70"/><circle cx="8" cy="7" r="2.500" fill="none" stroke="#9fdcff" stroke-dasharray="1 1"/></svg>
    <time>19:14</time>
  </div>
</footer>
</body>
</html>
```
FILE: styles.css
```css
:root {
  --face: #d4d0c8;
  --shadow: #808080;
  --ui: "DejaVu Sans Condensed", "DejaVu Sans", sans-serif;
}
* { box-sizing: border-box; }
body {
  margin: 0;
  min-height: 100vh;
  display: flex;
  flex-direction: column;
  background: var(--face);
  color: #000;
  font: 10px/14px var(--ui);
}
button, select { font: inherit; color: inherit; margin: 0; padding: 0; border: 0; background: none; }
i { font-style: normal; }
svg { display: block; }
.defs { position: absolute; width: 0; height: 0; }
.ic { width: 16px; height: 16px; flex: none; }
.flip { transform: scaleX(-1); }
.fill { flex: 1; }
.tiny { font: bold 5px "Liberation Sans", sans-serif; }
.red { color: #c3281c; }
.green { color: #58b531; }
.blue { color: #0f4ea5; }
.lime { color: #0b0; }
.gray { color: var(--shadow); }

.titlebar {
  height: 18px;
  display: flex;
  align-items: center;
  gap: 1px;
  padding: 0 2px;
  background: linear-gradient(90deg, #0a246a, #a6caf0);
}
.titlebar h1 { flex: 1; margin: 0; color: #fff; font: bold 11px/16px var(--ui); }
.winbtns { display: flex; margin-left: auto; }
.winbtns button {
  width: 16px;
  height: 14px;
  display: grid;
  place-items: center;
  background: var(--face);
  border: 1px solid;
  border-color: #fff #404040 #404040 #fff;
  box-shadow: inset -1px -1px var(--shadow);
}
.winbtns svg { width: 12px; height: 10px; }
.winbtns .close { margin-left: 2px; }

.menubar {
  height: 21px;
  display: flex;
  align-items: center;
  padding: 0 2px 0 4px;
  font-size: 11px;
  border-bottom: 1px solid var(--shadow);
}
.menubar > button { padding: 0 5px; }
.menubar .doc { padding: 1px; border: 1px solid #a07000; background: #fff; }

.toolbar {
  height: 24px;
  display: flex;
  align-items: center;
  border-top: 1px solid #fff;
  border-bottom: 1px solid var(--shadow);
}
.toolbar button { width: 23px; height: 22px; display: grid; place-items: center; }
.toolbar .on, .btnrow .on {
  background: repeating-conic-gradient(#fff 0 25%, var(--face) 0 50%) 0 0 / 2px 2px;
  border: 1px solid;
  border-color: var(--shadow) #fff #fff var(--shadow);
}
.grip { width: 6px; height: 20px; background: linear-gradient(90deg, transparent 3px, #fff 3px 4px, var(--shadow) 4px 5px, transparent 5px); }
.sep { width: 6px; height: 18px; background: linear-gradient(90deg, transparent 2px, var(--shadow) 2px 3px, #fff 3px 4px, transparent 4px); }
.toolend { width: 3px; height: 22px; border-left: 1px solid var(--shadow); border-right: 1px solid #fff; }

.work { flex: 1; display: flex; min-height: 0; }
.doc-area { flex: 1; min-width: 0; display: flex; flex-direction: column; border-left: 2px solid #404040; border-right: 2px solid #fff; border-top: 1px solid #000; }
.canvas { flex: 1; display: flex; min-height: 0; background: var(--shadow); border-bottom: 1px solid #000; }
.channels { width: 42px; padding: 0 1px; display: flex; flex-direction: column; background: #e0e0e0; border: 2px solid #b8ffff; border-top-width: 1px; }
.channels button {
  height: 30px;
  margin-top: 1px;
  display: grid;
  place-items: center;
  background: linear-gradient(#fff, #d8d8d8 40%, #888);
  border-right: 1px solid #444;
  border-bottom: 1px solid #444;
}
.channels .ch { margin-top: 0; color: #ff0; font: bold 19px/24px "Liberation Sans", Arial, sans-serif; }
.plot { flex: 1; min-width: 0; width: 100%; height: 100%; }
.grid path { stroke: #fffff0; stroke-dasharray: 1 3; shape-rendering: crispEdges; }
.axis { stroke: #fff; fill: none; shape-rendering: crispEdges; }
.trace polyline { fill: none; stroke: #ff0; stroke-width: 1; vector-effect: non-scaling-stroke; shape-rendering: crispEdges; }
.cursor { stroke: #00f000; shape-rendering: crispEdges; }
.ylab, .xlab { fill: #fff; font: 13px "Liberation Sans", Arial, sans-serif; }
.ylab { text-anchor: end; }
.xlab { text-anchor: middle; }
.caption { fill: #ff0; font: bold 16px "Liberation Serif", "Times New Roman", serif; white-space: pre; }

.sheetbar { height: 17px; display: flex; }
.sheetnav { display: flex; align-items: flex-start; }
.sheetnav button { width: 15px; height: 14px; display: grid; place-items: center; }
.sheetnav svg, .hscroll svg { width: 8px; height: 8px; }
.sheet { display: flex; margin-top: -1px; font: bold 11px/15px var(--ui); }
.sheet span { display: flex; align-items: center; gap: 2px; height: 16px; background: var(--face); border-bottom: 1px solid #000; }
.slant { width: 11px; height: 16px; }
.hscroll { width: 221px; display: flex; border-left: 3px double #404040; }
.hscroll button, .thumb {
  width: 16px;
  display: grid;
  place-items: center;
  background: var(--face);
  border: 1px solid;
  border-color: #fff #404040 #404040 #fff;
}
.track { flex: 1; background: repeating-conic-gradient(#fff 0 25%, var(--face) 0 50%) 0 0 / 2px 2px; }

.side { width: 193px; display: flex; flex-direction: column; padding: 2px 2px 7px 3px; border-bottom: 1px solid var(--shadow); }
.hgrip { height: 4px; margin-bottom: 4px; border: 1px solid; border-color: #fff var(--shadow) var(--shadow) #fff; }
.side label { font-size: 11px; line-height: 13px; }
.combo { position: relative; height: 23px; margin-top: 1px; }
.combo select {
  appearance: none;
  width: 100%;
  height: 100%;
  padding-left: 35px;
  font-size: 11px;
  background: #fff;
  border: 2px solid;
  border-color: var(--shadow) #fff #fff var(--shadow);
  border-radius: 0;
}
.swatch { position: absolute; left: 7px; top: 4px; width: 26px; height: 14px; background: #ff0; border: 1px solid #000; pointer-events: none; }
.drop { position: absolute; right: 2px; top: 2px; bottom: 2px; width: 15px; display: grid; place-items: center; background: var(--face); border: 1px solid; border-color: #fff var(--shadow) var(--shadow) #fff; pointer-events: none; }
.drop svg { width: 8px; height: 8px; }
.btnrow { display: flex; gap: 1px; margin-top: 4px; padding-right: 2px; }
.btnrow + .btnrow { margin-top: 3px; }
.btnrow button {
  width: 24px;
  height: 23px;
  display: grid;
  place-items: center;
  border: 1px solid;
  border-color: #fff #202020 #202020 #fff;
  box-shadow: inset -1px -1px var(--shadow);
}
.btnrow .on { border-color: var(--shadow) #fff #fff var(--shadow); box-shadow: none; }
.btnrow .spaced { margin-left: 18px; }
.coords {
  display: block;
  margin-top: 3px;
  padding: 4px 14px 4px 0;
  text-align: right;
  font: 14px/19px "DejaVu Sans", Verdana, sans-serif;
  border-top: 1px solid var(--shadow);
  border-bottom: 1px solid var(--shadow);
  box-shadow: inset 0 1px #fff, 0 1px #fff;
}
.reshead { display: flex; align-items: center; height: 21px; padding: 0 1px 1px 0; font-size: 11px; }
.reshead button {
  width: 18px;
  height: 17px;
  display: grid;
  place-items: center;
  border: 1px solid;
  border-color: #fff #202020 #202020 #fff;
  box-shadow: inset -1px -1px var(--shadow);
}
.reshead .dark { background: #363636; }
.reshead svg { width: 14px; height: 14px; }
.results { flex: 1; display: flex; gap: 1px; }
.vtabs { width: 24px; --glow: #0ff; }
.vtabs button {
  width: 20px;
  padding: 4px 0 3px 3px;
  display: flex;
  flex-direction: column;
  align-items: center;
  gap: 5px;
  font-size: 11px;
  border-bottom: 1px solid var(--shadow);
}
.vtabs button:first-child { padding-top: 2px; gap: 12px; }
.vtabs span { writing-mode: vertical-rl; transform: rotate(180deg); line-height: 14px; }
.vtabs .cur { font-weight: bold; }
.list { flex: 1; background: #000; border: 2px solid; border-color: var(--shadow) #fff #fff var(--shadow); color: #0f0; }
.item { padding: 1px 0 1px 4px; border: 1px dotted #fff; }
.item p { margin: 0 0 0 15px; font: bold 10px/11px "DejaVu Sans", Verdana, sans-serif; }
.item .f { display: flex; gap: 7px; margin: 0; font: 14px/16px "DejaVu Sans", Verdana, sans-serif; }
.item .f span:first-child { width: 23px; }

.status { height: 21px; display: flex; align-items: center; gap: 3px; padding: 0 7px 0 2px; font-size: 11px; border-top: 1px solid #fff; }
.cell { height: 16px; display: flex; align-items: center; padding: 0 10px 0 1px; border: 1px solid; border-color: var(--shadow) #fff #fff var(--shadow); }
.dash { width: 47px; padding-left: 17px; padding-right: 0; white-space: nowrap; }
.gauge { margin-left: 2px; }
.led { margin: 0 6px 0 -2px; }
.led2 { margin-left: -2px; }

.taskbar { height: 28px; display: flex; align-items: center; padding: 0 2px 2px; font-size: 11px; border-top: 1px solid #fff; }
.start, .tasks button {
  height: 22px;
  display: flex;
  align-items: center;
  background: var(--face);
  border: 1px solid;
  border-color: #fff #404040 #404040 #fff;
  box-shadow: inset -1px -1px var(--shadow);
}
.start { width: 52px; gap: 1px; padding-left: 1px; font-weight: bold; }
.tgrip { width: 3px; height: 20px; margin: 0 7px; border-left: 1px solid #fff; border-right: 1px solid var(--shadow); }
.far { margin-left: 169px; margin-right: 4px; }
.quick { display: flex; gap: 7px; }
.tasks { flex: 1; display: flex; gap: 3px; }
.tasks button { width: 160px; padding-left: 4px; gap: 3px; }
.tasks .active {
  font-weight: bold;
  border-color: #404040 #fff #fff #404040;
  box-shadow: inset 1px 1px var(--shadow);
  background: repeating-conic-gradient(#fff 0 25%, var(--face) 0 50%) 0 0 / 2px 2px;
}
.lang { width: 13px; height: 16px; margin-right: 4px; overflow: hidden; color: #fff; background: #0a246a; font-size: 10px; }
.tray { height: 23px; display: flex; align-items: center; gap: 2px; padding: 0 8px 0 3px; border: 1px solid; border-color: var(--shadow) #fff #fff var(--shadow); }
.tray b { font-size: 13px; width: 11px; }
.tray time { margin-left: 4px; }
```
